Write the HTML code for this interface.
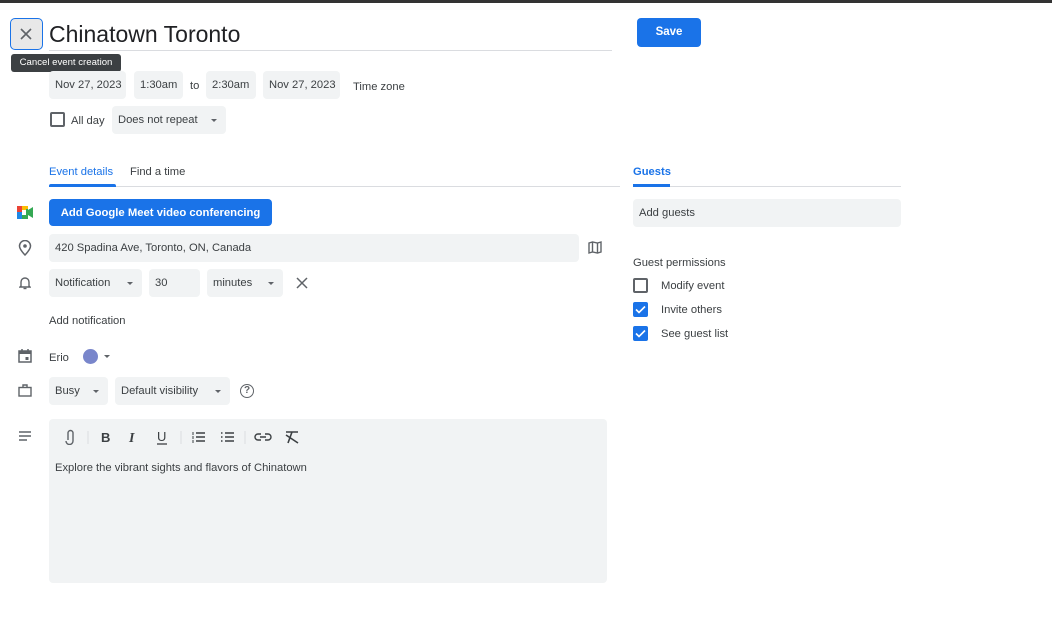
<!DOCTYPE html>
<html><head><meta charset="utf-8"><style>
*{box-sizing:border-box;margin:0;padding:0}
body{width:1052px;height:627px;background:#fff;position:relative;overflow:hidden;font-family:"Liberation Sans",Arial,sans-serif;color:#3c4043;font-size:11.2px;white-space:nowrap}
.a{position:absolute}
.t{position:absolute;margin-top:2px}
.chip{position:absolute;background:#f1f3f4;border-radius:4px;height:28px;line-height:28px;padding-left:6px;font-size:11.2px;color:#3c4043;white-space:nowrap}
.dd::after{content:"";position:absolute;right:9px;top:13px;border-left:3.5px solid transparent;border-right:3.5px solid transparent;border-top:3.5px solid #5f6368}
.cb{position:absolute;width:15px;height:15px;border:2px solid #5f6368;border-radius:2px}
.cb.on{background:#1a73e8;border-color:#1a73e8}
svg{position:absolute}
</style></head><body>
<div class="a" style="left:0;top:0;width:1052px;height:3px;background:#333"></div>
<div class="a" style="left:10px;top:18px;width:33px;height:32px;border:1.5px solid #1a73e8;border-radius:5px;background:#e8e8e8"></div>
<svg style="left:18px;top:26px" width="16" height="16" viewBox="0 0 16 16"><path d="M3 3L13 13M13 3L3 13" stroke="#5f6368" stroke-width="1.6"/></svg>
<div class="a" style="left:49px;top:21px;font-size:23px;color:#202124">Chinatown Toronto</div>
<div class="a" style="left:49px;top:50px;width:563px;height:1px;background:#dadce0"></div>
<div class="a" style="left:11px;top:54px;width:110px;height:18px;background:#3c4043;border-radius:3px;color:#fff;font-size:9.6px;line-height:18px;text-align:center">Cancel event creation</div>
<div class="a" style="left:637px;top:18px;width:64px;height:29px;background:#1a73e8;border-radius:4px;color:#fff;font-weight:bold;font-size:11.5px;line-height:29px;text-align:center">Save</div>

<div class="chip" style="left:49px;top:71px;width:77px">Nov 27, 2023</div>
<div class="chip" style="left:134px;top:71px;width:49px">1:30am</div>
<div class="t" style="left:190px;top:78px">to</div>
<div class="chip" style="left:206px;top:71px;width:50px">2:30am</div>
<div class="chip" style="left:263px;top:71px;width:77px">Nov 27, 2023</div>
<div class="t" style="left:353px;top:79px">Time zone</div>

<div class="cb" style="left:50px;top:112px"></div>
<div class="t" style="left:71px;top:113px">All day</div>
<div class="chip dd" style="left:112px;top:106px;width:114px">Does not repeat</div>

<div class="t" style="left:49px;top:164px;color:#1a73e8">Event details</div>
<div class="t" style="left:130px;top:164px">Find a time</div>
<div class="a" style="left:49px;top:186px;width:571px;height:1px;background:#dadce0"></div>
<div class="a" style="left:49px;top:184px;width:67px;height:3px;background:#1a73e8;border-radius:2px 2px 0 0"></div>
<div class="t" style="left:633px;top:164px;color:#1a73e8;font-weight:bold">Guests</div>
<div class="a" style="left:633px;top:186px;width:268px;height:1px;background:#dadce0"></div>
<div class="a" style="left:633px;top:184px;width:37px;height:3px;background:#1a73e8"></div>

<svg style="left:17px;top:206px" width="16" height="13" viewBox="0 0 16 13"><rect x="0" y="0" width="5" height="6" fill="#ea4335"/><rect x="5" y="0" width="6" height="4" fill="#fbbc04"/><rect x="0" y="6" width="5" height="7" fill="#1e88e5"/><rect x="5" y="9" width="6" height="4" fill="#34a853"/><rect x="5" y="4" width="6" height="5" fill="#fff"/><path d="M11 4L16 1V12L11 9Z" fill="#34a853"/><rect x="9" y="3" width="2" height="7" fill="#34a853"/></svg>
<div class="a" style="left:49px;top:199px;width:223px;height:27px;background:#1a73e8;border-radius:4px;color:#fff;font-weight:bold;font-size:11.3px;line-height:28px;text-align:center">Add Google Meet video conferencing</div>

<svg style="left:18px;top:240px" width="14" height="16" viewBox="0 0 14 16"><path d="M7 15C7 15 1.5 9.5 1.5 6A5.5 5.5 0 0 1 12.5 6C12.5 9.5 7 15 7 15Z" fill="none" stroke="#5f6368" stroke-width="1.5"/><circle cx="7" cy="6" r="1.8" fill="#5f6368"/></svg>
<div class="chip" style="left:49px;top:234px;width:530px">420 Spadina Ave, Toronto, ON, Canada</div>
<svg style="left:588px;top:241px" width="14" height="13" viewBox="0 0 14 13"><path d="M1 2L4.5 1L9.5 2L13 1V11L9.5 12L4.5 11L1 12Z M4.5 1V11 M9.5 2V12" fill="none" stroke="#5f6368" stroke-width="1.4"/></svg>

<svg style="left:19px;top:276px" width="12" height="14" viewBox="0 0 12 14"><path d="M2 10V6A4 4 0 0 1 10 6V10L11 11H1Z" fill="none" stroke="#5f6368" stroke-width="1.4"/><path d="M4.5 12.5H7.5" stroke="#5f6368" stroke-width="1.4"/></svg>
<div class="chip dd" style="left:49px;top:269px;width:93px">Notification</div>
<div class="chip" style="left:149px;top:269px;width:51px">30</div>
<div class="chip dd" style="left:207px;top:269px;width:76px">minutes</div>
<svg style="left:296px;top:277px" width="12" height="12" viewBox="0 0 12 12"><path d="M1 1L11 11M11 1L1 11" stroke="#5f6368" stroke-width="1.5"/></svg>
<div class="t" style="left:49px;top:313px">Add notification</div>

<svg style="left:18px;top:349px" width="14" height="14" viewBox="0 0 14 14"><rect x="1" y="2" width="12" height="11" fill="none" stroke="#5f6368" stroke-width="1.5"/><rect x="1" y="2" width="12" height="3" fill="#5f6368"/><path d="M4 0V3M10 0V3" stroke="#5f6368" stroke-width="1.5"/><rect x="7.5" y="8" width="3" height="3" fill="#5f6368"/></svg>
<div class="t" style="left:49px;top:350px">Erio</div>
<div class="a" style="left:83px;top:349px;width:15px;height:15px;border-radius:50%;background:#7986cb"></div>
<div class="a" style="left:104px;top:355px;border-left:3.5px solid transparent;border-right:3.5px solid transparent;border-top:3.5px solid #5f6368"></div>

<svg style="left:18px;top:384px" width="14" height="13" viewBox="0 0 14 13"><rect x="1" y="3.5" width="12" height="8.5" fill="none" stroke="#5f6368" stroke-width="1.4"/><path d="M5 3.5V1H9V3.5" fill="none" stroke="#5f6368" stroke-width="1.4"/></svg>
<div class="chip dd" style="left:49px;top:377px;width:59px">Busy</div>
<div class="chip dd" style="left:115px;top:377px;width:115px">Default visibility</div>
<div class="a" style="left:240px;top:384px;width:14px;height:14px;border:1.4px solid #5f6368;border-radius:50%;font-size:10px;line-height:11px;text-align:center;font-weight:bold;color:#5f6368">?</div>

<svg style="left:18px;top:431px" width="14" height="10" viewBox="0 0 14 10"><path d="M1 1H13M1 5H13M1 9H9" stroke="#5f6368" stroke-width="1.4"/></svg>
<div class="a" style="left:49px;top:419px;width:558px;height:164px;background:#f1f3f4;border-radius:4px"></div>
<svg style="left:63px;top:429px" width="240" height="16" viewBox="0 0 240 16">
<path d="M4 11V4A2.5 2.5 0 0 1 9 4V12A3.5 3.5 0 0 1 2 12" fill="none" stroke="#5f6368" stroke-width="1.4" transform="translate(1,0)"/>
<path d="M25 2V15" stroke="#dadce0"/>
<text x="38" y="13" font-family="Liberation Sans" font-weight="bold" font-size="13" fill="#3c4043">B</text>
<text x="66" y="13" font-family="Liberation Serif" font-style="italic" font-weight="bold" font-size="14" fill="#3c4043">I</text>
<text x="94" y="12" font-family="Liberation Sans" font-size="13" fill="#3c4043">U</text><path d="M94 15H104" stroke="#3c4043" stroke-width="1.3"/>
<path d="M118 2V15" stroke="#dadce0"/>
<path d="M133 4H142M133 8H142M133 12H142" stroke="#3c4043" stroke-width="1.4"/><path d="M130 3V6M130 7V10M130 11V14" stroke="#3c4043" stroke-width="1"/>
<path d="M162 4H171M162 8H171M162 12H171M158 4H159.5M158 8H159.5M158 12H159.5" stroke="#3c4043" stroke-width="1.4"/>
<path d="M182 2V15" stroke="#dadce0"/>
<path d="M198 5H195A3 3 0 0 0 195 11H198M202 5H205A3 3 0 0 1 205 11H202M197 8H203" fill="none" stroke="#3c4043" stroke-width="1.4"/>
<path d="M223 3H235M229 3L225 14M223 6L235 14" fill="none" stroke="#3c4043" stroke-width="1.6"/>
</svg>
<div class="t" style="left:55px;top:460px">Explore the vibrant sights and flavors of Chinatown</div>

<div class="a" style="left:633px;top:199px;width:268px;height:28px;background:#f1f3f4;border-radius:4px;padding-left:6px;line-height:28px">Add guests</div>
<div class="t" style="left:633px;top:255px">Guest permissions</div>
<div class="cb" style="left:633px;top:278px"></div>
<div class="t" style="left:661px;top:278px">Modify event</div>
<div class="cb on" style="left:633px;top:302px"></div>
<svg style="left:635px;top:305px" width="11" height="9" viewBox="0 0 11 9"><path d="M1 4.5L4 7.5L10 1.5" fill="none" stroke="#fff" stroke-width="1.6"/></svg>
<div class="t" style="left:661px;top:302px">Invite others</div>
<div class="cb on" style="left:633px;top:326px"></div>
<svg style="left:635px;top:329px" width="11" height="9" viewBox="0 0 11 9"><path d="M1 4.5L4 7.5L10 1.5" fill="none" stroke="#fff" stroke-width="1.6"/></svg>
<div class="t" style="left:661px;top:326px">See guest list</div>
</body></html>
